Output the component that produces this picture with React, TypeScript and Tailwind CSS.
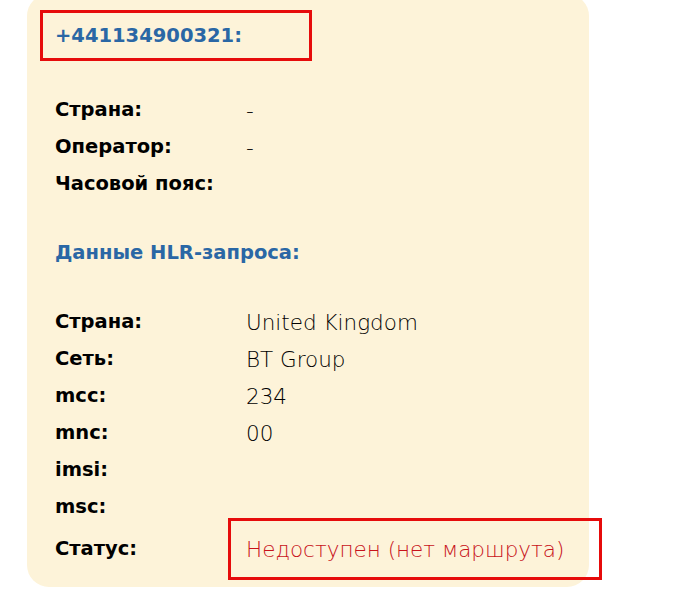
import React from "react";

const rows1 = [
    { label: "Страна:", value: "-" },
    { label: "Оператор:", value: "-" },
    { label: "Часовой пояс:", value: "" },
];

const rows2 = [
    { label: "Страна:", value: "United Kingdom" },
    { label: "Сеть:", value: "BT Group" },
    { label: "mcc:", value: "234" },
    { label: "mnc:", value: "00" },
    { label: "imsi:", value: "" },
    { label: "msc:", value: "" },
];

const Row = ({ label, value }: { label: string; value: string }) => (
    <div className="flex items-center h-[37px]">
        <div className="w-[191px] shrink-0 font-bold text-[19.5px] text-black">{label}</div>
        <div className="pt-[3px] font-['DejaVu_Sans'] font-extralight text-[21.5px] text-black">{value}</div>
    </div>
);

const App = () => {
    return <div className="min-h-screen bg-white font-['DejaVu_Sans','Liberation_Sans',sans-serif]">
        <div className="ml-[27px] mt-[-6px] w-[562px] h-[593px] bg-[#fdf3d9] rounded-[22px] pt-[16px] pb-[20px]">
            <div className="ml-[13px] w-[272px] h-[51px] border-[3px] border-[#e60b0b] flex items-center pl-[12px]">
                <span className="text-[19.5px] font-bold text-[#2a67a5]">+441134900321:</span>
            </div>

            <div className="pl-[28px] mt-[30px]">
                {rows1.map((r, i) => <Row key={i} {...r} />)}

                <div className="h-[37px] mt-[32px] flex items-center font-bold text-[19.5px] text-[#2a67a5]">
                    Данные HLR-запроса:
                </div>

                <div className="mt-[32px]">
                    {rows2.map((r, i) => <Row key={i} {...r} />)}
                    <div className="flex items-center h-[37px] mt-[5px]">
                        <div className="w-[173px] shrink-0 font-bold text-[19.5px] text-black">Статус:</div>
                        <div className="w-[374px] shrink-0 h-[62px] -my-[12px] border-[3px] border-[#e60b0b] flex items-center pl-[15px] pt-[3px] font-['DejaVu_Sans'] font-extralight text-[21.5px] text-[#c8121a]">
                            Недоступен (нет маршрута)
                        </div>
                    </div>
                </div>
            </div>
        </div>
    </div>
}

export default App;
